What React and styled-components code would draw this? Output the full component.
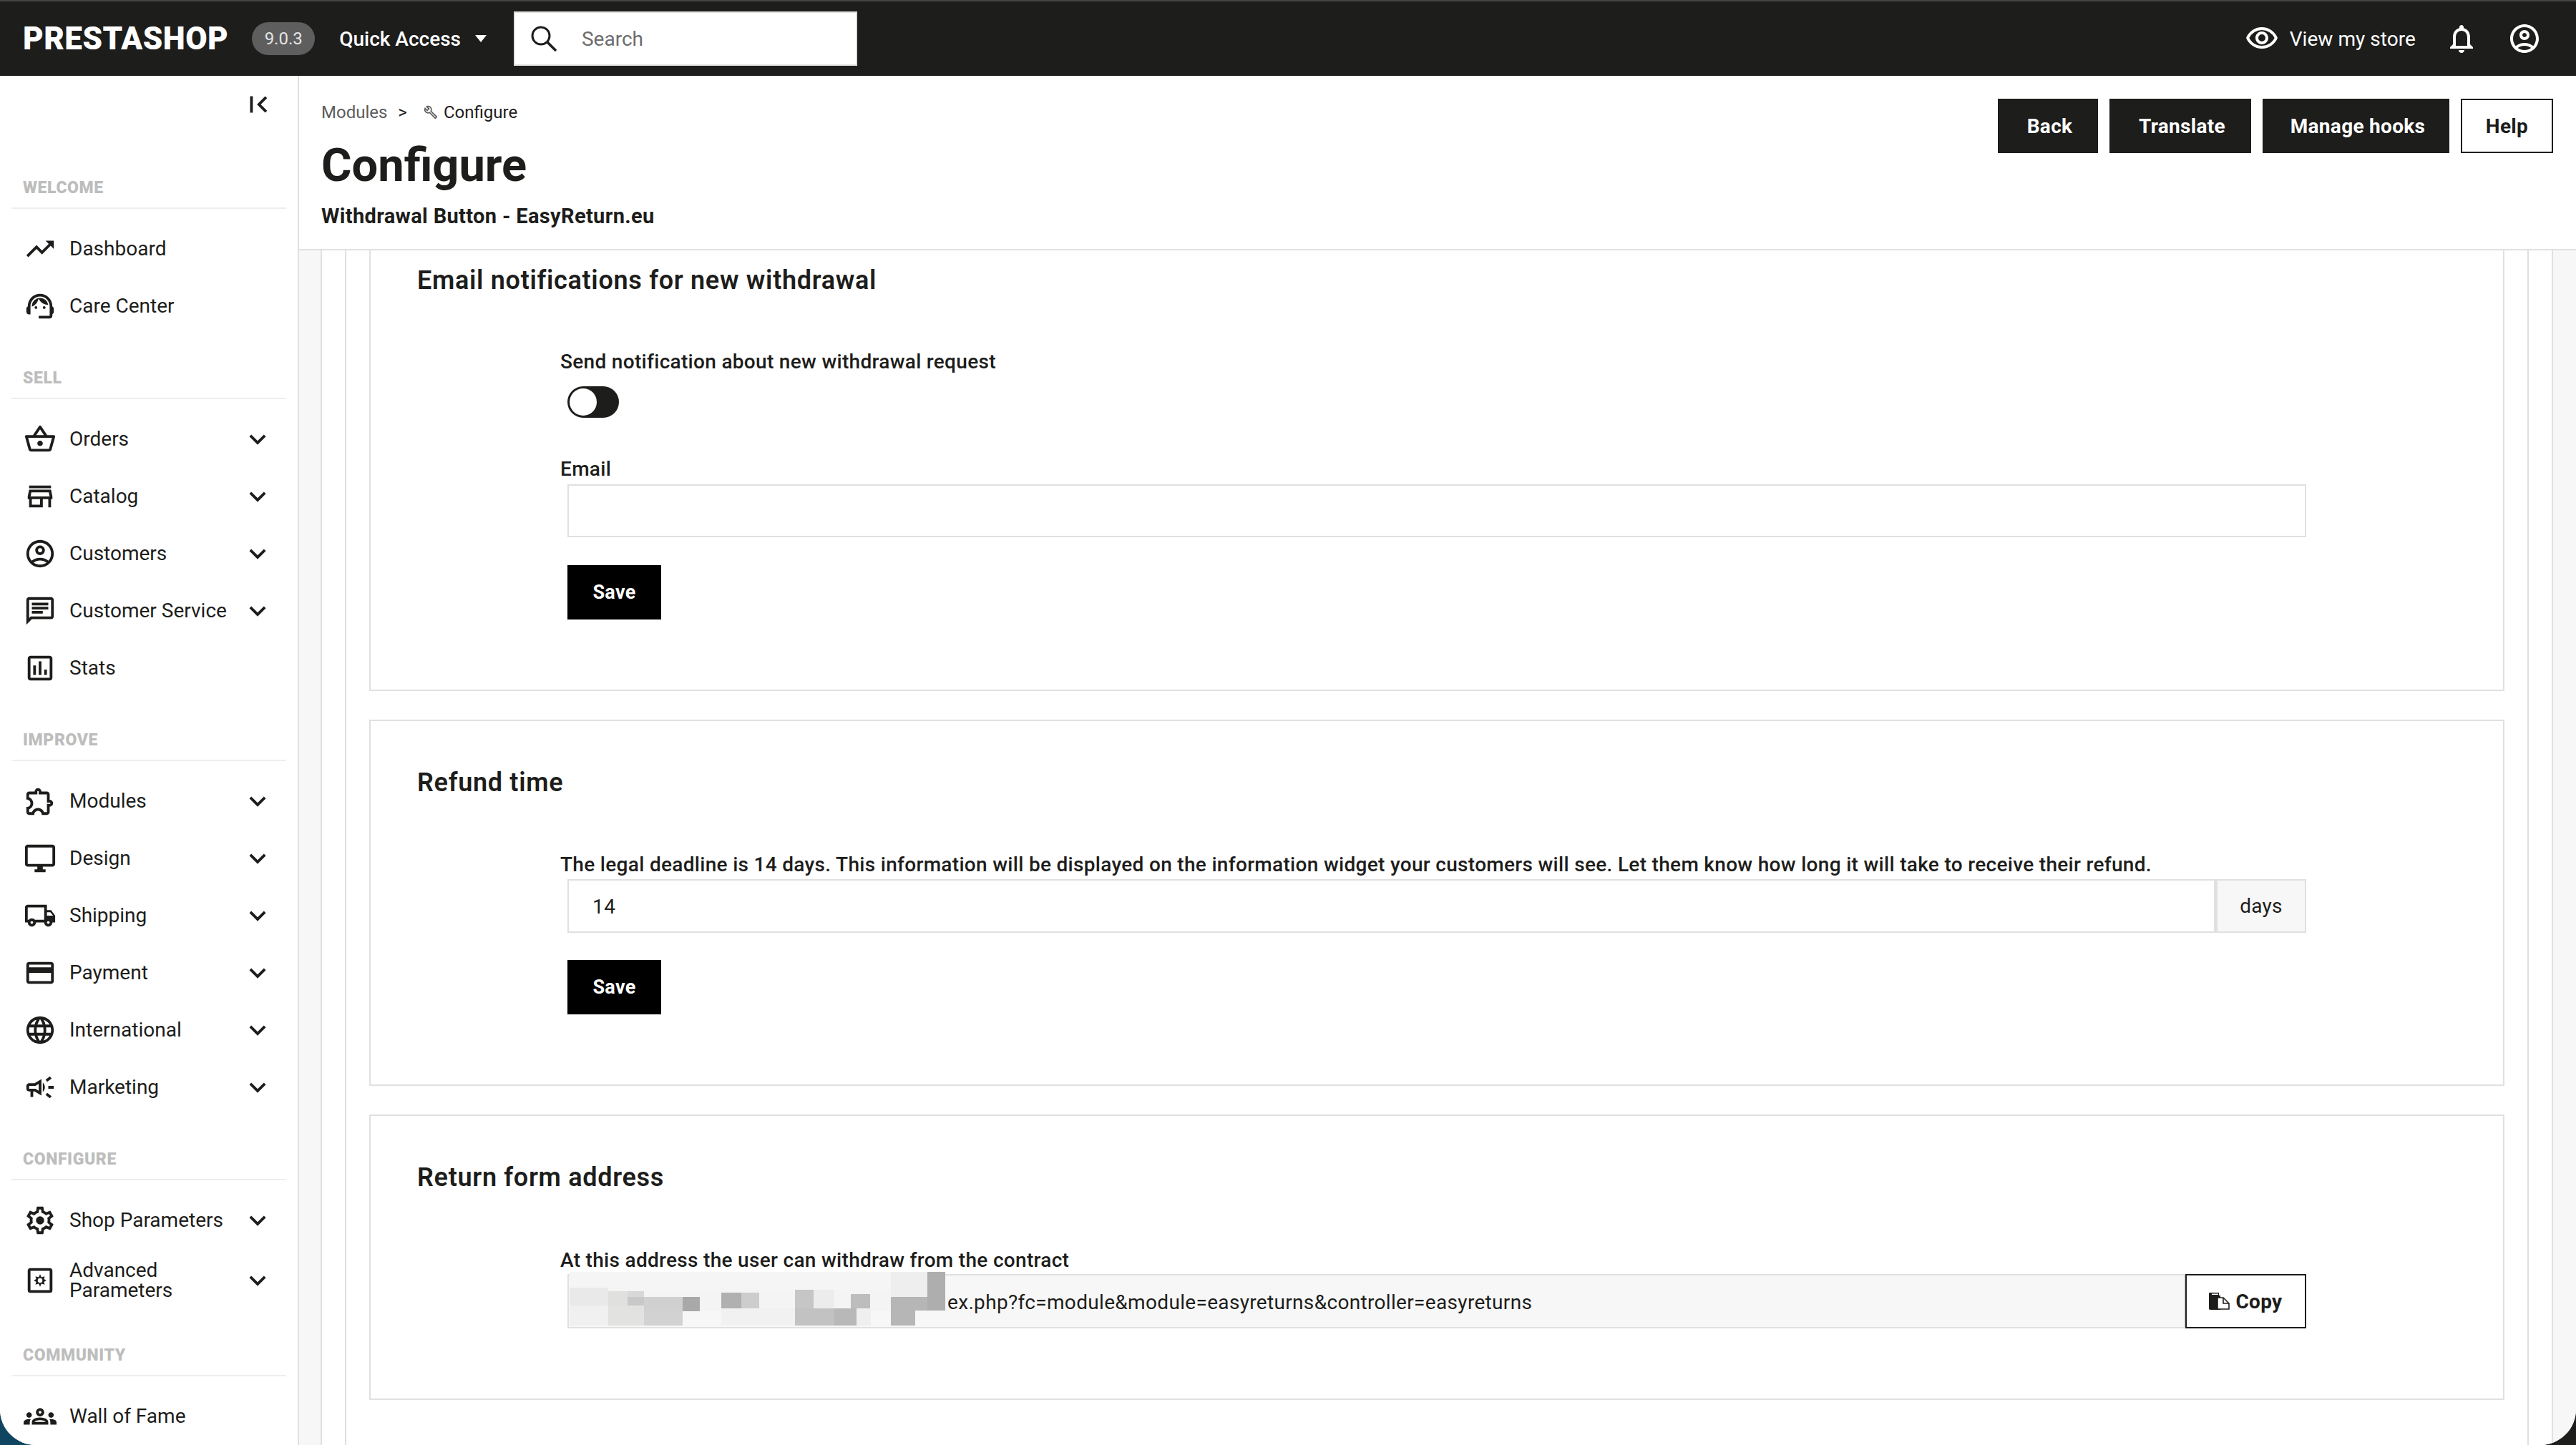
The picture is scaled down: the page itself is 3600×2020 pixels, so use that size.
import React from 'react'
import styled, { createGlobalStyle } from 'styled-components'
import {
  MdFirstPage, MdOutlineVisibility, MdOutlineNotifications, MdOutlineAccountCircle,
  MdOutlineBuild, MdExpandMore, MdTrendingUp, MdOutlineSupportAgent, MdOutlineShoppingBasket,
  MdOutlineStore, MdOutlineChat, MdOutlineAssessment, MdOutlineExtension, MdOutlineDesktopWindows,
  MdOutlineLocalShipping, MdOutlineCreditCard, MdOutlineLanguage, MdOutlineCampaign,
  MdOutlineGroups,
} from 'react-icons/md'

const FONT = `Roboto, "Liberation Sans", sans-serif`
const INK = '#1d1d1b'
const LINE = '#e0e0e0'

const GlobalStyle = createGlobalStyle`
  html, body { margin: 0; padding: 0; }
  body {
    width: 3600px;
    height: 2020px;
    overflow: hidden;
    background: linear-gradient(90deg, #0f4560 0%, #1d1d1b 100%);
    font-family: ${FONT};
    color: ${INK};
  }
  * { box-sizing: border-box; }
`

const Frame = styled.div`
  width: 3600px;
  height: 2020px;
  display: flex;
  flex-direction: column;
  overflow: hidden;
  background: #fff;
  border-radius: 0 0 50px 50px;
`

/* top bar */
const TopBar = styled.header`
  flex: none;
  height: 106px;
  display: flex;
  align-items: center;
  padding: 0 48px 0 32px;
  background: ${INK};
  border-top: 2px solid #444;
  color: #fff;
`
const Logo = styled.span`
  font-size: 44px;
  font-weight: 900;
  letter-spacing: 0.5px;
  line-height: 1;
`
const Version = styled.span`
  margin-left: 33px;
  width: 88px;
  height: 46px;
  display: flex;
  align-items: center;
  justify-content: center;
  border-radius: 23px;
  background: #5e5e5e;
  color: #e4e4e4;
  font-size: 24px;
`
const QuickAccess = styled.span`
  margin-left: 34px;
  font-size: 28px;
  font-weight: 500;
`
const Caret = styled.span`
  margin-left: 20px;
  width: 0;
  height: 0;
  border-left: 8px solid transparent;
  border-right: 8px solid transparent;
  border-top: 10px solid #fff;
`
const SearchBox = styled.div`
  margin-left: 38px;
  width: 480px;
  height: 76px;
  display: flex;
  align-items: center;
  gap: 35px;
  padding-left: 22px;
  background: #fff;
  border: 2px solid ${LINE};
  color: ${INK};
`
const SearchText = styled.span`
  font-size: 28px;
  color: #6c6c6c;
`
const TopRight = styled.div`
  margin-left: auto;
  display: flex;
  align-items: center;
  gap: 40px;
`
const StoreLink = styled.span`
  display: flex;
  align-items: center;
  gap: 15px;
  font-size: 28px;
  letter-spacing: 0.05px;
`

/* sidebar */
const Body = styled.div`
  flex: 1;
  min-height: 0;
  display: flex;
`
const Sidebar = styled.nav`
  flex: none;
  position: relative;
  width: 418px;
  padding-top: 96px;
  border-right: 2px solid ${LINE};
  background: #fff;
`
const Collapse = styled.span`
  position: absolute;
  top: 17px;
  right: 32px;
  display: flex;
`
const GroupTitle = styled.div`
  margin: 48px 0 15px;
  padding: 1px 0 0 32px;
  font-size: 23px;
  line-height: 24px;
  font-weight: 900;
  color: #bdbdbd;
  letter-spacing: 0.6px;
  text-transform: uppercase;
`
const GroupRule = styled.div`
  margin: 0 16px 16px;
  height: 2px;
  background: #eee;
`
const NavRow = styled.div`
  height: ${p => (p.$tall ? 88 : 80)}px;
  display: flex;
  align-items: center;
  gap: 18px;
  padding: 0 33px;
`
const NavIcon = styled.span`
  flex: none;
  width: 46px;
  height: 46px;
  display: flex;
`
const NavLabel = styled.span`
  flex: 1;
  font-size: 28px;
  line-height: 28px;
  white-space: nowrap;
`

/* main area */
const Main = styled.main`
  flex: 1;
  min-width: 0;
  display: flex;
  flex-direction: column;
`
const PageHead = styled.div`
  flex: none;
  height: 244px;
  display: flex;
  justify-content: space-between;
  padding: 32px 32px 0 31px;
  border-bottom: 2px solid ${LINE};
`
const Crumbs = styled.div`
  margin-top: 4px;
  display: flex;
  align-items: center;
  height: 30px;
  font-size: 24px;
`
const CrumbLink = styled.span`
  color: #5c5c5c;
`
const CrumbSep = styled.span`
  margin: 0 23px 0 15px;
`
const CrumbIcon = styled.span`
  display: flex;
  margin-right: 8px;
  color: #5c5c5c;
`
const PageTitle = styled.h1`
  margin: 19px 0 0;
  font-size: 65px;
  line-height: 80px;
  font-weight: 700;
`
const PageSub = styled.div`
  margin-top: 13px;
  font-size: 29px;
  line-height: 36px;
  font-weight: 700;
  letter-spacing: 0.35px;
`
const HeadButtons = styled.div`
  display: flex;
  gap: 16px;
`
const HeadButton = styled.button`
  width: ${p => p.$width}px;
  height: 76px;
  padding: 0 0 0 ${p => (p.$light ? 0 : 5)}px;
  border: ${p => (p.$light ? 2 : 3)}px solid ${INK};
  background: ${p => (p.$light ? '#fff' : INK)};
  color: ${p => (p.$light ? INK : '#fff')};
  font: 700 28px ${FONT};
  letter-spacing: 0.3px;
`

const Scroller = styled.div`
  flex: 1;
  min-height: 0;
  display: flex;
  overflow: hidden;
  padding: 0 32px 0 30px;
  background: #f7f7f7;
`
const CardShell = styled.div`
  flex: 1;
  min-width: 0;
  display: flex;
  padding: 0 32px;
  background: #fff;
  border-left: 2px solid ${LINE};
  border-right: 2px solid ${LINE};
`
const InnerShell = styled(CardShell)`
  margin-top: -46px;
  flex-direction: column;
  gap: 40px;
`
const Section = styled.section`
  padding: 62px 275px ${p => p.$bottom}px 65px;
  border: 2px solid ${LINE};
`
const SectionTitle = styled.h3`
  margin: 0 0 ${p => p.$gap}px;
  font-size: 36px;
  line-height: 48px;
  font-weight: 600;
  letter-spacing: 0.7px;
`
const FormBody = styled.div`
  display: flex;
  flex-direction: column;
  padding-left: 200px;
`
const FieldLabel = styled.label`
  margin-top: ${p => p.$top || 0}px;
  font-size: 28px;
  line-height: 36px;
  font-weight: 500;
  letter-spacing: 0.31px;
`
const Toggle = styled.span`
  position: relative;
  margin: 16px 0 0 10px;
  width: 72px;
  height: 44px;
  border-radius: 22px;
  background: ${INK};
`
const ToggleKnob = styled.span`
  position: absolute;
  top: 3px;
  left: 3px;
  width: 38px;
  height: 38px;
  border-radius: 50%;
  background: #fff;
`
const TextInput = styled.input`
  display: block;
  flex: 1;
  min-width: 0;
  height: 100%;
  padding: 2px 0 0 33px;
  border: 2px solid ${LINE};
  background: #fff;
  outline: none;
  font: 400 28px ${FONT};
  letter-spacing: 0.4px;
  color: ${INK};
`
const InputRow = styled.div`
  position: relative;
  display: flex;
  margin: ${p => p.$top || 0}px 0 0 10px;
  height: ${p => p.$height}px;
`
const Addon = styled.span`
  flex: none;
  width: 127px;
  display: flex;
  align-items: center;
  justify-content: center;
  background: #f7f7f7;
  border: 2px solid ${LINE};
  border-left-width: 3px;
  font-size: 28px;
  letter-spacing: 0.3px;
`
const SaveButton = styled.button`
  align-self: flex-start;
  margin: ${p => p.$top}px 0 0 10px;
  width: 131px;
  height: 76px;
  border: 0;
  background: #000;
  color: #fff;
  font: 700 27px ${FONT};
  letter-spacing: 0.3px;
`
const AddressField = styled.div`
  flex: 1;
  display: flex;
  align-items: center;
  padding: 2px 0 0 529px;
  background: #f7f7f7;
  border: 2px solid ${LINE};
  font-size: 28px;
  letter-spacing: 0.33px;
`
const Mosaic = styled.svg`
  position: absolute;
  left: 3px;
  top: -3px;
`
const CopyButton = styled.button`
  flex: none;
  width: 169px;
  display: flex;
  align-items: center;
  justify-content: center;
  gap: 8px;
  border: 2px solid ${INK};
  background: #fff;
  color: ${INK};
  font: 700 28px ${FONT};
  letter-spacing: 0.3px;
`

const GearDot = () => (
  <svg viewBox="0 0 24 24" width="46" height="46" fill={INK}>
    <path d="M19.43 12.98c.04-.32.07-.64.07-.98 0-.34-.03-.66-.07-.98l2.11-1.65c.19-.15.24-.42.12-.64l-2-3.46c-.09-.16-.26-.25-.44-.25-.06 0-.12.01-.17.03l-2.49 1c-.52-.4-1.08-.73-1.69-.98l-.38-2.65C14.46 2.18 14.25 2 14 2h-4c-.25 0-.46.18-.49.42l-.38 2.65c-.61.25-1.17.59-1.69.98l-2.49-1c-.06-.02-.12-.03-.18-.03-.17 0-.34.09-.43.25l-2 3.46c-.13.22-.07.49.12.64l2.11 1.65c-.04.32-.07.65-.07.98 0 .33.03.66.07.98l-2.11 1.65c-.19.15-.24.42-.12.64l2 3.46c.09.16.26.25.44.25.06 0 .12-.01.17-.03l2.49-1c.52.4 1.08.73 1.69.98l.38 2.65c.03.24.24.42.49.42h4c.25 0 .46-.18.49-.42l.38-2.65c.61-.25 1.17-.59 1.69-.98l2.49 1c.06.02.12.03.18.03.17 0 .34-.09.43-.25l2-3.46c.12-.22.07-.49-.12-.64l-2.11-1.65zm-1.98-1.71c.04.31.05.52.05.73 0 .21-.02.43-.05.73l-.14 1.13.89.7 1.08.84-.7 1.21-1.27-.51-1.04-.42-.9.68c-.43.32-.84.56-1.25.73l-1.06.43-.16 1.13-.2 1.35h-1.4l-.19-1.35-.16-1.13-1.06-.43c-.43-.18-.83-.41-1.23-.71l-.91-.7-1.06.43-1.27.51-.7-1.21 1.08-.84.89-.7-.14-1.13c-.03-.31-.05-.54-.05-.74s.02-.43.05-.73l.14-1.13-.89-.7-1.08-.84.7-1.21 1.27.51 1.04.42.9-.68c.43-.32.84-.56 1.25-.73l1.06-.43.16-1.13.2-1.35h1.39l.19 1.35.16 1.13 1.06.43c.43.18.83.41 1.23.71l.91.7 1.06-.43 1.27-.51.7 1.21-1.07.85-.89.7.14 1.13z" />
    <circle cx="12" cy="12" r="3" />
  </svg>
)

const BoxGear = () => (
  <svg viewBox="0 0 24 24" width="46" height="46">
    <rect x="4" y="4" width="16" height="16" rx="1" fill="none" stroke={INK} strokeWidth="2" />
    <polygon
      fill={INK}
      points="12,7.4 13,9.6 15.4,9 14.8,10.9 16.6,12 14.8,13.1 15.4,15 13,14.4 12,16.6 11,14.4 8.6,15 9.2,13.1 7.4,12 9.2,10.9 8.6,9 11,9.6"
    />
    <circle cx="12" cy="12" r="1.7" fill="#fff" />
  </svg>
)

const SearchGlass = () => (
  <svg viewBox="0 0 36 36" width="36" height="36" fill="none" stroke={INK} strokeWidth="3">
    <circle cx="14" cy="14" r="12" />
    <path d="M22.5 22.5L35 35" strokeWidth="3.5" />
  </svg>
)

const CopyIcon = () => (
  <svg viewBox="0 0 29 24" width="29" height="24">
    <path d="M1 0h13v4h2v20H2a2 2 0 0 1-2-2V1a1 1 0 0 1 1-1z" fill={INK} />
    <rect x="4" y="1.5" width="9" height="1.5" fill="#fff" />
    <path d="M12 7h8l8 8v8H12z" fill="#fff" stroke={INK} strokeWidth="1.6" />
    <path d="M20 7v8h8" fill="none" stroke={INK} strokeWidth="1.6" />
  </svg>
)

// blurred part of the address, cells read off the reference
const MOSAIC = [
  [0, 0, 525, 25, '#f5f5f5'], [0, 25, 525, 30, '#f4f4f4'],
  [0, 22, 54, 25, '#e9e9e9'], [0, 47, 54, 28, '#f0f0f0'],
  [54, 27, 27, 20, '#e0e0de'], [54, 47, 50, 28, '#e2e2e0'],
  [81, 27, 23, 8, '#d8d8d8'], [81, 35, 23, 12, '#c8c8c8'],
  [104, 35, 54, 20, '#d0d0d0'], [104, 55, 54, 20, '#d2d2d2'],
  [158, 35, 24, 20, '#a9a9a9'], [158, 55, 50, 20, '#f7f7f7'],
  [212, 29, 28, 22, '#b0b0b0'], [240, 29, 25, 22, '#cdcdcd'],
  [212, 51, 103, 24, '#f1f1f1'], [315, 25, 26, 26, '#c6c6c6'],
  [341, 25, 29, 26, '#ececec'], [315, 51, 55, 24, '#c2c2c2'],
  [370, 51, 31, 24, '#b8b8b8'], [393, 31, 27, 20, '#bdbdbd'],
  [401, 51, 20, 24, '#efefef'], [449, 35, 34, 40, '#b6b6b6'],
  [483, 35, 17, 19, '#b6b6b6'], [449, 0, 51, 35, '#eeeeee'],
  [500, 0, 25, 54, '#aeaeae'],
]

const NAV = [
  { title: 'Welcome', items: [
    { label: 'Dashboard', icon: MdTrendingUp },
    { label: 'Care Center', icon: MdOutlineSupportAgent },
  ] },
  { title: 'Sell', items: [
    { label: 'Orders', icon: MdOutlineShoppingBasket, more: true },
    { label: 'Catalog', icon: MdOutlineStore, more: true },
    { label: 'Customers', icon: MdOutlineAccountCircle, more: true },
    { label: 'Customer Service', icon: MdOutlineChat, more: true },
    { label: 'Stats', icon: MdOutlineAssessment },
  ] },
  { title: 'Improve', items: [
    { label: 'Modules', icon: MdOutlineExtension, more: true },
    { label: 'Design', icon: MdOutlineDesktopWindows, more: true },
    { label: 'Shipping', icon: MdOutlineLocalShipping, more: true },
    { label: 'Payment', icon: MdOutlineCreditCard, more: true },
    { label: 'International', icon: MdOutlineLanguage, more: true },
    { label: 'Marketing', icon: MdOutlineCampaign, more: true },
  ] },
  { title: 'Configure', items: [
    { label: 'Shop Parameters', icon: GearDot, more: true },
    { label: <>Advanced<br />Parameters</>, icon: BoxGear, more: true, tall: true },
  ] },
  { title: 'Community', items: [
    { label: 'Wall of Fame', icon: MdOutlineGroups },
  ] },
]

export default function App() {
  return (
    <Frame>
      <GlobalStyle />
      <TopBar>
        <Logo>PRESTASHOP</Logo>
        <Version>9.0.3</Version>
        <QuickAccess>Quick Access</QuickAccess>
        <Caret />
        <SearchBox>
          <SearchGlass />
          <SearchText>Search</SearchText>
        </SearchBox>
        <TopRight>
          <StoreLink>
            <MdOutlineVisibility size={48} />
            View my store
          </StoreLink>
          <MdOutlineNotifications size={48} />
          <MdOutlineAccountCircle size={48} />
        </TopRight>
      </TopBar>
      <Body>
        <Sidebar>
          <Collapse><MdFirstPage size={46} /></Collapse>
          {NAV.map(group => (
            <div key={group.title}>
              <GroupTitle>{group.title}</GroupTitle>
              <GroupRule />
              {group.items.map((item, i) => (
                <NavRow key={i} $tall={item.tall}>
                  <NavIcon><item.icon size={46} /></NavIcon>
                  <NavLabel>{item.label}</NavLabel>
                  {item.more && <MdExpandMore size={46} />}
                </NavRow>
              ))}
            </div>
          ))}
        </Sidebar>
        <Main>
          <PageHead>
            <div>
              <Crumbs>
                <CrumbLink>Modules</CrumbLink>
                <CrumbSep>&gt;</CrumbSep>
                <CrumbIcon><MdOutlineBuild size={20} /></CrumbIcon>
                Configure
              </Crumbs>
              <PageTitle>Configure</PageTitle>
              <PageSub>Withdrawal Button - EasyReturn.eu</PageSub>
            </div>
            <HeadButtons>
              <HeadButton $width={140}>Back</HeadButton>
              <HeadButton $width={198}>Translate</HeadButton>
              <HeadButton $width={261}>Manage hooks</HeadButton>
              <HeadButton $width={129} $light>Help</HeadButton>
            </HeadButtons>
          </PageHead>
          <Scroller>
            <CardShell>
              <InnerShell>
                <Section $bottom={98}>
                  <SectionTitle $gap={72}>Email notifications for new withdrawal</SectionTitle>
                  <FormBody>
                    <FieldLabel>Send notification about new withdrawal request</FieldLabel>
                    <Toggle><ToggleKnob /></Toggle>
                    <FieldLabel $top={54}>Email</FieldLabel>
                    <InputRow $top={3} $height={74}>
                      <TextInput readOnly value="" />
                    </InputRow>
                    <SaveButton $top={39}>Save</SaveButton>
                  </FormBody>
                </Section>
                <Section $bottom={98}>
                  <SectionTitle $gap={73}>Refund time</SectionTitle>
                  <FormBody>
                    <FieldLabel>The legal deadline is 14 days. This information will be displayed on the information widget your customers will see. Let them know how long it will take to receive their refund.</FieldLabel>
                    <InputRow $top={2} $height={75}>
                      <TextInput readOnly value="14" />
                      <Addon>days</Addon>
                    </InputRow>
                    <SaveButton $top={38}>Save</SaveButton>
                  </FormBody>
                </Section>
                <Section $bottom={98}>
                  <SectionTitle $gap={74}>Return form address</SectionTitle>
                  <FormBody>
                    <FieldLabel>At this address the user can withdraw from the contract</FieldLabel>
                    <InputRow $top={1} $height={76}>
                      <AddressField>ex.php?fc=module&amp;module=easyreturns&amp;controller=easyreturns</AddressField>
                      <CopyButton><CopyIcon />Copy</CopyButton>
                      <Mosaic width="525" height="75" viewBox="0 0 525 75">
                        {MOSAIC.map(([x, y, w, h, c], i) => (
                          <rect key={i} x={x} y={y} width={w} height={h} fill={c} />
                        ))}
                      </Mosaic>
                    </InputRow>
                  </FormBody>
                </Section>
              </InnerShell>
            </CardShell>
          </Scroller>
        </Main>
      </Body>
    </Frame>
  )
}
